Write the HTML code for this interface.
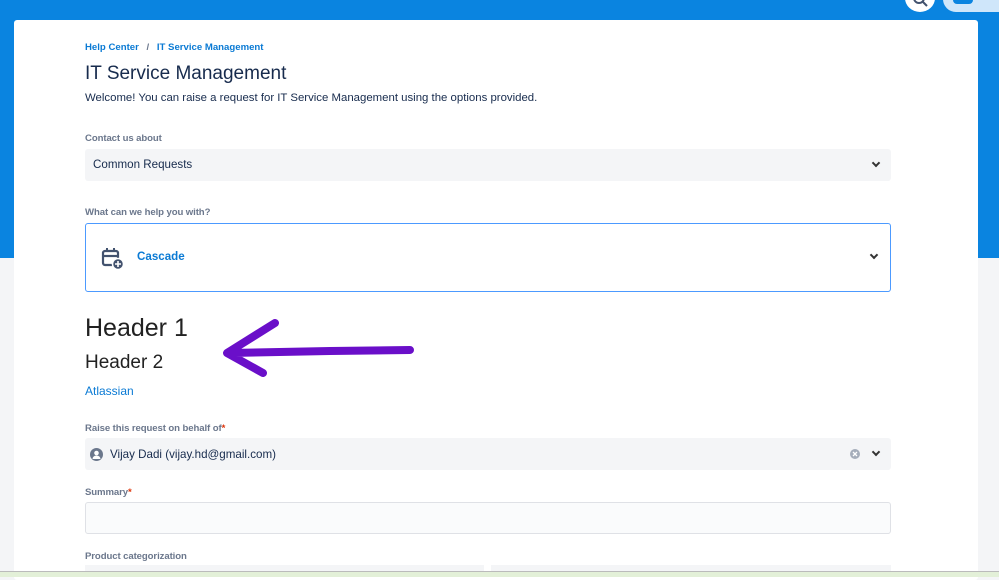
<!DOCTYPE html>
<html><head><style>
*{margin:0;padding:0;box-sizing:border-box}
body{width:999px;height:577px;overflow:hidden;font-family:"Liberation Sans",sans-serif;background:#f4f5f7;position:relative}
.top{position:absolute;left:0;top:0;width:999px;height:258px;background:#0a84e0}
.card{position:absolute;left:14px;top:20px;width:964px;height:560px;background:#fff;border-radius:3px}
.a{position:absolute}
.lbl{font-size:9.6px;font-weight:bold;color:#6b778c;letter-spacing:-0.1px}
.sel{position:absolute;left:85px;width:806px;background:#f4f5f7;border-radius:3px}
.chev{position:absolute;right:12px;width:6px;height:6px;border-right:2px solid #333;border-bottom:2px solid #333;transform:rotate(45deg)}
</style></head><body>
<div class="top"></div>
<div class="a" style="left:905px;top:-16px;width:30px;height:28px;border-radius:50%;background:#fff"></div>
<svg class="a" style="left:911px;top:-4px" width="18" height="14"><circle cx="8" cy="2" r="5" fill="none" stroke="#42526e" stroke-width="2"/><path d="M12 6l4 4" stroke="#42526e" stroke-width="2"/></svg>
<div class="a" style="left:943px;top:-14px;width:70px;height:26px;border-radius:13px;background:#cfe6fa"></div>
<div class="a" style="left:953px;top:-6px;width:20px;height:10px;border-radius:4px;background:#0a84e0"></div>
<div class="card"></div>
<div class="a" style="left:85px;top:42px;font-size:9.6px;font-weight:bold;color:#0a7ad4">Help Center <span style="color:#6b778c;margin:0 5px">/</span> IT Service Management</div>
<div class="a" style="left:85px;top:63px;font-size:19px;color:#172b4d">IT Service Management</div>
<div class="a" style="left:85px;top:92px;font-size:11.4px;color:#172b4d">Welcome! You can raise a request for IT Service Management using the options provided.</div>
<div class="a lbl" style="left:85px;top:133px">Contact us about</div>
<div class="sel" style="top:149px;height:32px"><span class="a" style="left:8px;top:9px;font-size:11.6px;color:#172b4d">Common Requests</span><div class="chev" style="top:11px"></div></div>
<div class="a lbl" style="left:85px;top:207px">What can we help you with?</div>
<div class="a" style="left:85px;top:223px;width:806px;height:69px;border:1.5px solid #4c9aff;border-radius:3px">
<svg class="a" style="left:15px;top:24px" width="24" height="22" viewBox="0 0 24 22"><rect x="2" y="3" width="15" height="14" rx="2" fill="none" stroke="#42526e" stroke-width="2.2"/><line x1="2" y1="8" x2="17" y2="8" stroke="#42526e" stroke-width="2.2"/><line x1="6" y1="0" x2="6" y2="4" stroke="#42526e" stroke-width="2"/><line x1="13" y1="0" x2="13" y2="4" stroke="#42526e" stroke-width="2"/><circle cx="17" cy="16" r="5.5" fill="#42526e" stroke="#fff" stroke-width="1.5"/><path d="M17 13v6M14 16h6" stroke="#fff" stroke-width="1.6"/></svg>
<span class="a" style="left:51px;top:26px;font-size:11.6px;font-weight:bold;color:#0a7ad4">Cascade</span><div class="chev" style="top:28px;right:13px"></div></div>
<div class="a" style="left:85px;top:314px;font-size:25px;color:#222">Header 1</div>
<div class="a" style="left:85px;top:352px;font-size:19px;color:#222">Header 2</div>
<div class="a" style="left:85px;top:384px;font-size:12px;color:#0a7ad4">Atlassian</div>
<svg class="a" style="left:215px;top:315px" width="200" height="65"><path d="M60 8 L12 38 L48 58 M14 38 L115 36 L195 35" fill="none" stroke="#6a0fc9" stroke-width="8" stroke-linecap="round" stroke-linejoin="round"/></svg>
<div class="a lbl" style="left:85px;top:423px">Raise this request on behalf of<span style="color:#de350b">*</span></div>
<div class="sel" style="top:438px;height:32px">
<svg class="a" style="left:5px;top:10px" width="13" height="13"><circle cx="6.5" cy="6.5" r="6.5" fill="#6b778c"/><circle cx="6.5" cy="5" r="2.3" fill="#fff"/><path d="M2.5 11a4 3.5 0 0 1 8 0z" fill="#fff"/></svg>
<span class="a" style="left:25px;top:10px;font-size:11.6px;color:#172b4d">Vijay Dadi (vijay.hd@gmail.com)</span>
<svg class="a" style="left:765px;top:11px" width="10" height="10"><circle cx="5" cy="5" r="5" fill="#a5adba"/><path d="M3 3l4 4M7 3l-4 4" stroke="#fff" stroke-width="1.3"/></svg>
<div class="chev" style="top:11px"></div></div>
<div class="a lbl" style="left:85px;top:487px">Summary<span style="color:#de350b">*</span></div>
<div class="a" style="left:85px;top:502px;width:806px;height:32px;background:#fafbfc;border:1px solid #dfe1e6;border-radius:3px"></div>
<div class="a lbl" style="left:85px;top:551px">Product categorization</div>
<div class="a" style="left:85px;top:565px;width:399px;height:10px;background:#f4f5f7"></div>
<div class="a" style="left:491px;top:565px;width:400px;height:10px;background:#f4f5f7"></div>
<div class="a" style="left:0;top:571px;width:999px;height:6px;background:#e3f0d8;border-top:1px solid #bbb"></div>
</body></html>
